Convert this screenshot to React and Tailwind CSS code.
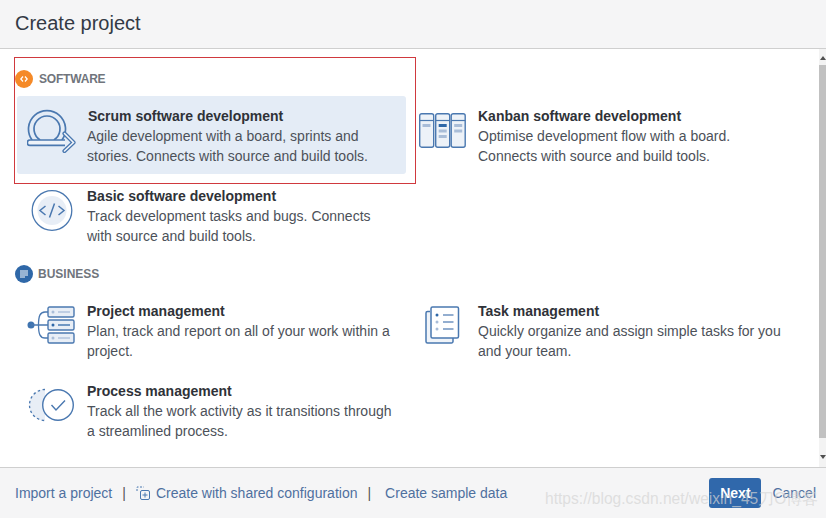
const Item = ({ icon, title, titleClass = "", lines, active }) => (
  <div className={`flex h-[78px] w-[389px] rounded-[3px] ${active ? "bg-[#e4ecf6]" : ""}`}>
    <div className="w-[70px] shrink-0 flex justify-center">{icon}</div>
    <div className="text-[14px] leading-[20px] text-[#4c5159] pt-[10px]">
      <div className={`font-bold text-[#2f3238] ${titleClass}`}>{title}</div>
      {lines.map((l) => (
        <div key={l}>{l}</div>
      ))}
    </div>
  </div>
);

const S = "#4a78b0";

const ScrumIcon = () => (
  <svg width="50" height="44" viewBox="0 0 50 44" fill="none" className="mt-[13px] ml-[-1px]">
    <path d="M5.100 31A18.500 18.500 0 1 1 34.900 31" stroke={S} strokeWidth="1.700" />
    <path d="M13.100 31A13 13 0 1 1 26.900 31" stroke={S} strokeWidth="1.700" />
    <path d="M38 31H3a2.700 2.700 0 0 0 0 5.400H38" fill="#eef3f9" stroke={S} strokeWidth="1.700" />
    <path d="M37.500 24.500L46.500 33.500 37.500 42" stroke={S} strokeWidth="4.200" strokeLinejoin="round" strokeLinecap="round" />
    <path d="M37.500 24.500L46.500 33.500 37.500 42" stroke="#f4f7fb" strokeWidth="1.500" strokeLinecap="round" />
  </svg>
);

const BasicIcon = () => (
  <svg width="42" height="42" viewBox="0 0 42 42" fill="none" className="mt-[14px] ml-[-1px]">
    <circle cx="21" cy="20.500" r="19.800" stroke={S} strokeWidth="1.300" />
    <circle cx="21" cy="20.500" r="14.500" fill="#e8eef6" />
    <path d="M14.500 16L9 20.500l5.500 4.500M27.500 16L33 20.500l-5.500 4.500M23.500 13.500l-5 14" stroke={S} strokeWidth="1.500" />
  </svg>
);

const KanbanIcon = () => (
  <svg width="48" height="35" viewBox="0 0 48 35" fill="none" className="mt-[17px] ml-[-1px]">
    {[0.7, 16.7, 32.2].map((x) => (
      <g key={x}>
        <rect x={x} y="0.700" width="14" height="33.500" rx="2" fill="#edf2f8" stroke={S} strokeWidth="1.400" />
        <path d={`M${x} 7.500h14`} stroke={S} strokeWidth="1.200" />
      </g>
    ))}
    <rect x="3.500" y="11" width="8" height="3" fill="#a9bdd8" />
    <rect x="19.700" y="11" width="8" height="3" fill="#2f68a8" />
    <rect x="19.700" y="16.500" width="8" height="3" fill="#a9bdd8" />
    <rect x="19.700" y="22" width="8" height="3" fill="#a9bdd8" />
    <rect x="35.200" y="11" width="8" height="3" fill="#a9bdd8" />
    <rect x="35.200" y="16.500" width="8" height="3" fill="#a9bdd8" />
  </svg>
);

const ProjectIcon = () => (
  <svg width="48" height="38" viewBox="0 0 48 38" fill="none" className="mt-[15px] ml-[-2px]">
    <circle cx="4" cy="19" r="3.500" fill="#3f74b0" />
    <path d="M4 19h17M21 6h-3c-5 0-6.500 4-6.500 13s1.500 13 6.500 13h3" stroke={S} strokeWidth="1.300" />
    {[1, 14, 27].map((y, i) => (
      <g key={y}>
        <rect x="21" y={y} width="26" height="10" rx="1.500" fill="#e8eef6" stroke={S} strokeWidth="1.400" />
        <circle cx="26" cy={y + 5} r="1.500" fill={i === 1 ? "#2f68a8" : "#a9bdd8"} />
        <path d={`M31 ${y + 5}h12`} stroke={i === 1 ? "#2f68a8" : "#a9bdd8"} strokeWidth="1.300" />
      </g>
    ))}
  </svg>
);

const ProcessIcon = () => (
  <svg width="48" height="34" viewBox="0 0 48 34" fill="none" className="mt-[17px] ml-[-2px]">
    <path d="M18 1.500A15.500 15.500 0 0 0 18 32.500z" fill="#e8eef6" />
    <path d="M18 1.500A15.500 15.500 0 1 0 18 32.500" stroke={S} strokeWidth="1.300" strokeDasharray="2.500 2.500" />
    <circle cx="31" cy="17" r="15.300" fill="#fff" stroke={S} strokeWidth="1.400" />
    <path d="M24.500 17l4.500 5 9-9.500" stroke={S} strokeWidth="1.400" />
  </svg>
);

const TaskIcon = () => (
  <svg width="35" height="38" viewBox="0 0 35 38" fill="none" className="mt-[15px] ml-[-1px]">
    <path d="M5 5.500H2.500A1.500 1.500 0 0 0 1 7v28.500A1.500 1.500 0 0 0 2.500 37h24a1.500 1.500 0 0 0 1.500-1.500V32" stroke={S} strokeWidth="1.500" fill="#f0f4f9" />
    <rect x="6" y="1" width="27.500" height="31" rx="1.500" fill="#fff" stroke={S} strokeWidth="1.500" />
    {[9, 16, 23].map((y, i) => (
      <g key={y}>
        <circle cx="12" cy={y} r="1.500" fill={i === 0 ? "#2f68a8" : "#a9bdd8"} />
        <path d={`M18 ${y}h10.500`} stroke={S} strokeWidth="1.200" />
      </g>
    ))}
  </svg>
);

const Heading = ({ color, children, label, mt = "", labelClass = "" }) => (
  <div className={`flex items-center h-[18px] ${mt}`}>
    <span className={`w-[18px] h-[18px] rounded-full flex items-center justify-center ${color}`}>{children}</span>
    <span className={`text-[12px] font-bold text-[#70757c] leading-[18px] ${labelClass}`}>{label}</span>
  </div>
);

export default function App() {
  return (
    <div className="relative w-[826px] h-[518px] overflow-hidden bg-white font-['Liberation_Sans',Arial,sans-serif] flex flex-col">
      <header className="h-[49px] shrink-0 bg-[#f5f5f6] border-b border-[#cfcfcf] pl-[15px] flex items-center">
        <h1 className="text-[20px] leading-[24px] text-[#333a45] mb-[2px]">Create project</h1>
      </header>

      <div className="flex-1 min-h-0 flex">
        <main className="flex-1 pl-[15px] pt-[21px]">
          <Heading color="bg-[#f58a28]" label="SOFTWARE" labelClass="ml-[6px] tracking-[-0.2px]">
            <svg width="8" height="6" viewBox="0 0 8 6" fill="none">
              <path d="M3 .5L.8 3 3 5.500M5 .5L7.200 3 5 5.500" stroke="#fff" strokeWidth="1.200" />
            </svg>
          </Heading>
          <div className="mt-[8px] ml-[2px] grid grid-cols-[391px_1fr]">
            <Item active icon={<ScrumIcon />} title="Scrum software development" titleClass="ml-[1px]" lines={["Agile development with a board, sprints and", "stories. Connects with source and build tools."]} />
            <Item icon={<KanbanIcon />} title="Kanban software development" lines={["Optimise development flow with a board.", "Connects with source and build tools."]} />
            <div className="mt-[2px]">
              <Item icon={<BasicIcon />} title="Basic software development" lines={["Track development tasks and bugs. Connects", "with source and build tools."]} />
            </div>
          </div>
          <Heading color="bg-[#2f68a8]" label="BUSINESS" mt="mt-[11px]" labelClass="ml-[5px]">
            <svg width="10" height="8" viewBox="0 0 10 8" fill="none">
              <path d="M1 1h8M1 3h8M1 5h8M1 7h5" stroke="#fff" strokeWidth="1" />
            </svg>
          </Heading>
          <div className="mt-[8px] ml-[2px] grid grid-cols-[391px_1fr] gap-y-[2px]">
            <Item icon={<ProjectIcon />} title="Project management" lines={["Plan, track and report on all of your work within a", "project."]} />
            <Item icon={<TaskIcon />} title="Task management" lines={["Quickly organize and assign simple tasks for you", "and your team."]} />
            <Item icon={<ProcessIcon />} title="Process management" lines={["Track all the work activity as it transitions through", "a streamlined process."]} />
          </div>
        </main>
        <div className="w-[7px] shrink-0 bg-[#f3f3f3] flex flex-col items-center">
          <div className="mt-[7px] h-[9px] w-full flex justify-center">
            <div className="w-0 h-0 border-x-[3px] border-x-transparent border-b-[4px] border-b-[#505050]" />
          </div>
          <div className="h-[373px] w-full bg-[#c1c1c1]" />
          <div className="flex-1 flex items-end justify-center pb-[8px]">
            <div className="w-0 h-0 border-x-[3px] border-x-transparent border-t-[4px] border-t-[#505050]" />
          </div>
        </div>
      </div>

      <footer className="h-[51px] shrink-0 bg-[#f5f5f6] border-t border-[#cfcfcf] flex items-center pl-[15px] text-[14px] text-[#4f709f]">
        <span>Import a project</span>
        <span className="ml-[10px] text-[#555]">|</span>
        <svg width="15" height="14" viewBox="0 0 15 14" fill="none" className="ml-[10px] mr-[5px]">
          <path d="M1 5V1h7" stroke={S} strokeWidth="1" strokeDasharray="2 1.500" />
          <rect x="4.500" y="4.500" width="9" height="9" rx="1.500" stroke={S} />
          <path d="M9 6.500v5M6.500 9h5" stroke={S} />
        </svg>
        <span>Create with shared configuration</span>
        <span className="ml-[10px] text-[#555]">|</span>
        <span className="ml-[14px]">Create sample data</span>
        <div className="ml-auto flex items-center pr-[10px]">
          <span className="flex items-center justify-center w-[52px] h-[30px] rounded-[3px] bg-[#3068ab] text-white font-bold">Next</span>
          <span className="ml-[11px]">Cancel</span>
        </div>
      </footer>

      <div className="absolute left-[14px] top-[57px] w-[402px] h-[127px] border border-[#d0393e] pointer-events-none" />
      <div className="absolute left-[545px] top-[489px] whitespace-nowrap text-[15.6px] leading-[20px] text-[#d4d4d4]/70 pointer-events-none">https://blog.csdn.net/weixin_45刀O博客</div>
    </div>
  );
}
